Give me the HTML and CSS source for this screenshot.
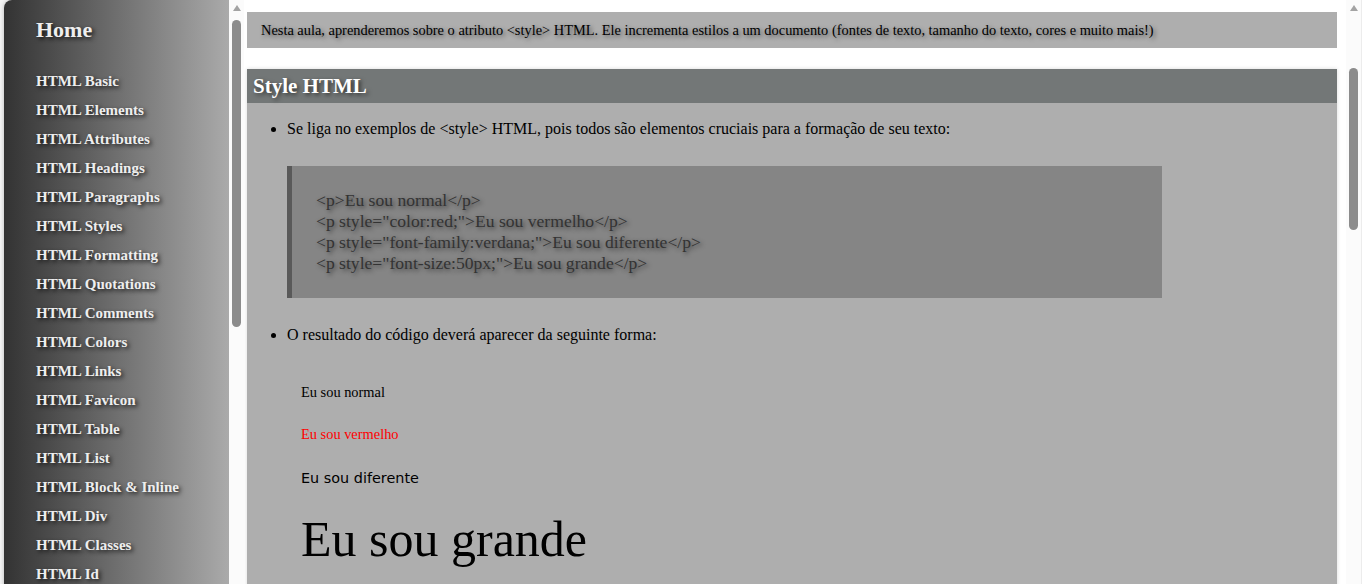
FILE: index.html
```html
<!DOCTYPE html>
<html lang="pt-BR">
<head>
<meta charset="utf-8">
<title>Style HTML</title>
<link rel="stylesheet" href="styles.css">
</head>
<body>
<div class="layout">
  <aside class="sidebar">
    <nav class="menu">
      <a class="home" href="#">Home</a>
      <ul class="menu-list">
        <li><a href="#">HTML Basic</a></li>
        <li><a href="#">HTML Elements</a></li>
        <li><a href="#">HTML Attributes</a></li>
        <li><a href="#">HTML Headings</a></li>
        <li><a href="#">HTML Paragraphs</a></li>
        <li><a href="#">HTML Styles</a></li>
        <li><a href="#">HTML Formatting</a></li>
        <li><a href="#">HTML Quotations</a></li>
        <li><a href="#">HTML Comments</a></li>
        <li><a href="#">HTML Colors</a></li>
        <li><a href="#">HTML Links</a></li>
        <li><a href="#">HTML Favicon</a></li>
        <li><a href="#">HTML Table</a></li>
        <li><a href="#">HTML List</a></li>
        <li><a href="#">HTML Block &amp; Inline</a></li>
        <li><a href="#">HTML Div</a></li>
        <li><a href="#">HTML Classes</a></li>
        <li><a href="#">HTML Id</a></li>
        <li><a href="#">HTML Iframes</a></li>
        <li><a href="#">HTML JavaScript</a></li>
        <li><a href="#">HTML File Paths</a></li>
        <li><a href="#">HTML Head</a></li>
        <li><a href="#">HTML Layout</a></li>
        <li><a href="#">HTML Responsive</a></li>
        <li><a href="#">HTML Computercode</a></li>
        <li><a href="#">HTML Semantics</a></li>
        <li><a href="#">HTML Style Guide</a></li>
        <li><a href="#">HTML Entities</a></li>
        <li><a href="#">HTML Symbols</a></li>
        <li><a href="#">HTML Emojis</a></li>
        <li><a href="#">HTML Charset</a></li>
        <li><a href="#">HTML URL Encode</a></li>
      </ul>
    </nav>
  </aside>
  <div class="rail rail-side" aria-hidden="true">
    <span class="rail-arrow"></span>
    <span class="rail-thumb"></span>
  </div>
  <main class="content">
    <p class="intro">Nesta aula, aprenderemos sobre o atributo &lt;style&gt; HTML. Ele incrementa estilos a um documento (fontes de texto, tamanho do texto, cores e muito mais!)</p>
    <section class="lesson">
      <h2 class="lesson-title">Style HTML</h2>
      <ul class="points">
        <li>Se liga no exemplos de &lt;style&gt; HTML, pois todos são elementos cruciais para a formação de seu texto:
          <blockquote class="code">&lt;p&gt;Eu sou normal&lt;/p&gt;<br>&lt;p style="color:red;"&gt;Eu sou vermelho&lt;/p&gt;<br>&lt;p style="font-family:verdana;"&gt;Eu sou diferente&lt;/p&gt;<br>&lt;p style="font-size:50px;"&gt;Eu sou grande&lt;/p&gt;</blockquote>
        </li>
        <li>O resultado do código deverá aparecer da seguinte forma:
          <div class="result">
            <p class="sample">Eu sou normal</p>
            <p class="sample sample-red">Eu sou vermelho</p>
            <p class="sample sample-verdana">Eu sou diferente</p>
            <p class="sample sample-big">Eu sou grande</p>
          </div>
        </li>
      </ul>
    </section>
  </main>
  <div class="rail rail-page" aria-hidden="true">
    <span class="rail-arrow"></span>
    <span class="rail-thumb"></span>
  </div>
</div>
</body>
</html>
```

FILE: styles.css
```css
html, body {
  margin: 0;
  height: 100%;
}

body {
  font-family: "Liberation Serif", "Times New Roman", serif;
  background: #ffffff;
  color: #000;
}

.layout {
  display: flex;
  height: 100vh;
  padding-right: 3px;
  box-sizing: border-box;
  overflow: hidden;
}

/* scroll rails */
.rail {
  flex: none;
  width: 15px;
  display: flex;
  flex-direction: column;
  align-items: center;
  background: #fbfbfb;
}

.rail-arrow {
  margin-top: 5px;
  width: 0;
  height: 0;
  border-left: 4.5px solid transparent;
  border-right: 4.5px solid transparent;
  border-bottom: 6px solid #a3a3a3;
}

.rail-thumb {
  width: 9px;
  border-radius: 5px;
  background: #8c8c8c;
}

.rail-side .rail-thumb {
  margin-top: 9px;
  height: 307px;
}

.rail-page {
  border-right: 1px solid #ececec;
}

.rail-page .rail-thumb {
  margin-top: 57px;
  height: 162px;
}

.sidebar {
  width: 229px;
  flex: none;
  overflow-y: auto;
  background: #f4f4f4;
}

.menu {
  margin-left: 4px;
  padding: 17px 0 20px 32px;
  background: linear-gradient(to right, #333333, #aaaaaa);
  border-top-left-radius: 8px;
  box-shadow: 0 0 4px rgba(0, 0, 0, 0.25);
}

.home {
  display: block;
  font-size: 22px;
  line-height: 25px;
  font-weight: bold;
  color: #eeeeee;
  text-decoration: none;
  text-shadow: 2px 2px 4px rgba(0, 0, 0, 0.8);
  margin-bottom: 25px;
}

.menu-list {
  list-style: none;
  margin: 0;
  padding: 0;
}

.menu-list li {
  line-height: 29px;
  font-size: 15px;
  font-weight: bold;
}

.menu-list a {
  color: #eeeeee;
  text-decoration: none;
  text-shadow: 2px 2px 4px rgba(0, 0, 0, 0.8);
}

.content {
  flex: 1;
  min-width: 0;
  overflow-y: auto;
  padding: 12px 9px 0 3px;
  background: #ffffff;
}

.intro {
  margin: 0;
  padding: 10px 14px;
  background: #aeaeae;
  font-size: 14.4px;
  line-height: 16px;
  text-shadow: 2px 2px 4px rgba(0, 0, 0, 0.55);
}

.lesson {
  margin-top: 21px;
  background: #aeaeae;
  min-height: 1930px;
  box-shadow: 0 0 4px rgba(0, 0, 0, 0.15);
}

.lesson-title {
  margin: 0;
  padding-left: 6px;
  background: #737777;
  color: #ffffff;
  font-size: 21px;
  line-height: 34px;
  text-shadow: 2px 2px 4px rgba(0, 0, 0, 0.6);
}

.points {
  margin: 0;
  padding: 17px 0 0 40px;
  font-size: 16px;
}

.code {
  box-sizing: border-box;
  width: 875px;
  margin: 28px 0 28px;
  padding: 24px;
  border-left: 5px solid #595959;
  background: #858585;
  color: #333333;
  font-size: 17.6px;
  line-height: 21px;
  text-shadow: 2px 2px 4px rgba(0, 0, 0, 0.55);
}

.result {
  padding: 15px 0 0 14px;
}

.sample {
  margin: 25px 0;
  font-size: 14.4px;
}

.sample-red {
  color: #ff0000;
}

.sample-verdana {
  margin: 27px 0 24px;
  font-family: Verdana, "DejaVu Sans", sans-serif;
}

.sample-big {
  margin-top: 24px;
  font-size: 50px;
}
```
